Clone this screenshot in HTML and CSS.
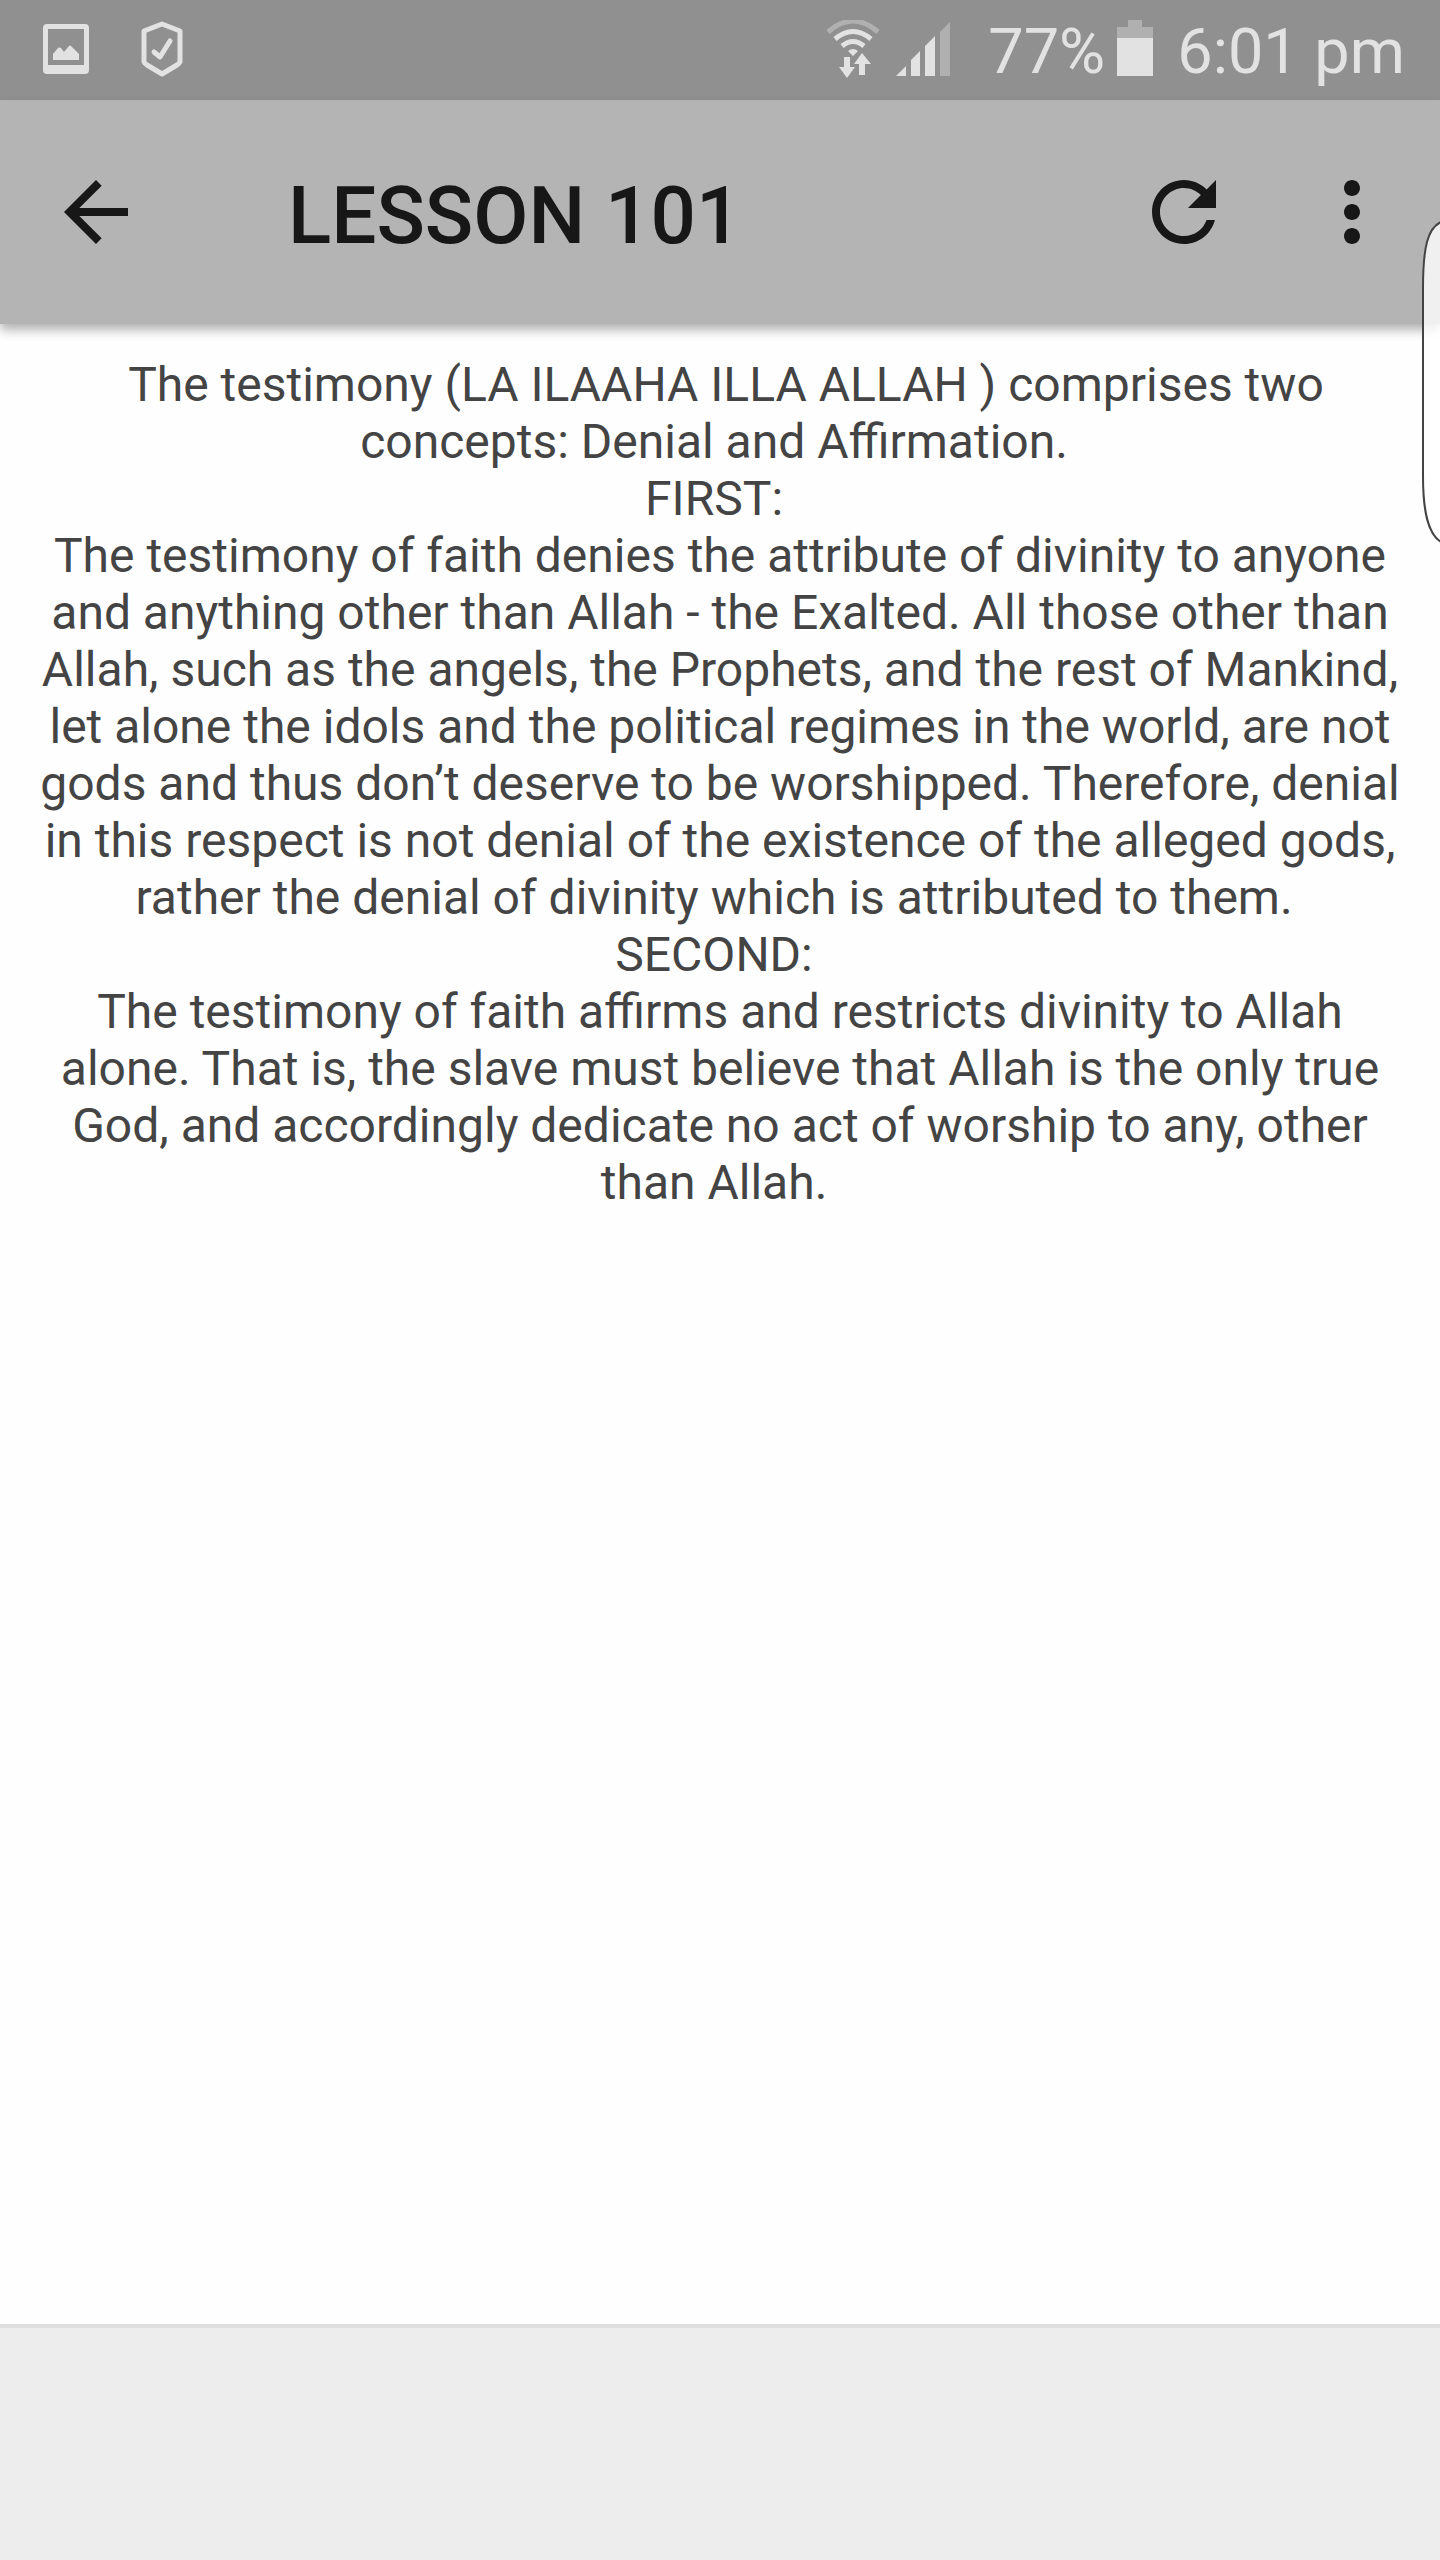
FILE: index.html
```html
<!DOCTYPE html>
<html lang="en">
<head>
<meta charset="utf-8">
<meta name="viewport" content="width=device-width, initial-scale=1">
<title>Lesson 101</title>
<link rel="stylesheet" href="styles.css">
</head>
<body>
<div class="status-bar">
  <div class="notifications">
    <svg width="46" height="60" viewBox="0 0 46 60" aria-hidden="true">
      <path fill="currentColor" fill-rule="evenodd" d="M4 4H42Q46 4 46 8V50Q46 54 42 54H4Q0 54 0 50V8Q0 4 4 4ZM5 9V45H41V9Z"/>
      <path fill="currentColor" d="M10 40V34L15 28Q16 27 18 28L21 32L26 26Q27 25 28 26L36 34V40Z"/>
    </svg>
    <svg width="42" height="60" viewBox="0 0 42 60" fill="none" stroke="currentColor" stroke-width="5" stroke-linejoin="round" stroke-linecap="round" aria-hidden="true">
      <path d="M21 4L39 11V42Q38 44 36 45L21 54L6 45Q4 44 3 42V11Z"/>
      <path d="M13 32L19 37L29 21"/>
    </svg>
  </div>
  <div class="system">
    <svg class="wifi" width="54" height="60" viewBox="0 0 54 60" aria-hidden="true">
      <g fill="none" stroke="currentColor" stroke-width="5">
        <path class="dim" d="M2 12Q27 -10 52 12"/>
        <path d="M9 19Q27 4 45 19"/>
        <path d="M16 26Q27 17 38 26"/>
      </g>
      <path fill="currentColor" d="M22 31Q27 27 32 31L27 36ZM18 37H24V47H29L21 58L13 47H18ZM33 55V44H28L36 33L45 44H39V55Z"/>
    </svg>
    <svg class="signal" width="54" height="60" viewBox="0 0 54 60" aria-hidden="true">
      <path fill="currentColor" d="M0 56L10 46V56ZM15 56V40L24 31V56ZM29 56V26L39 16V56Z"/>
      <path class="dim-fill" d="M44 56V12L54 2V56Z"/>
    </svg>
    <span class="status-text">77%</span>
    <svg class="battery" width="36" height="60" viewBox="0 0 36 60" aria-hidden="true">
      <path class="dim-fill" d="M11 0H25V7H36V18H0V7H11Z"/>
      <path fill="currentColor" d="M0 18H36V56H0Z"/>
    </svg>
    <span class="status-text">6:01 pm</span>
  </div>
</div>
<header class="app-bar">
  <button class="icon-button" type="button" aria-label="Back">
    <svg viewBox="0 0 24 24" aria-hidden="true"><path fill="currentColor" d="M20 11H7.830l5.590-5.590L12 4l-8 8 8 8 1.410-1.410L7.830 13H20v-2z"/></svg>
  </button>
  <h1 class="title">LESSON 101</h1>
  <div class="actions">
    <button class="icon-button" type="button" aria-label="Refresh">
      <svg viewBox="0 0 24 24" aria-hidden="true"><path fill="currentColor" d="M17.650 6.350C16.200 4.900 14.210 4 12 4c-4.420 0-7.990 3.580-7.990 8s3.570 8 7.990 8c3.730 0 6.840-2.550 7.730-6h-2.080c-.82 2.330-3.040 4-5.650 4-3.310 0-6-2.690-6-6s2.690-6 6-6c1.660 0 3.140.69 4.220 1.780L13 11h7V4l-2.350 2.350z"/></svg>
    </button>
    <button class="icon-button" type="button" aria-label="More options">
      <svg viewBox="0 0 24 24" aria-hidden="true"><path fill="currentColor" d="M12 8c1.100 0 2-.9 2-2s-.9-2-2-2-2 .9-2 2 .9 2 2 2zm0 2c-1.100 0-2 .9-2 2s.9 2 2 2 2-.9 2-2-.9-2-2-2zm0 6c-1.100 0-2 .9-2 2s.9 2 2 2 2-.9 2-2-.9-2-2-2z"/></svg>
    </button>
  </div>
</header>
<main class="lesson">
  <p>&nbsp;The testimony (LA ILAAHA ILLA ALLAH ) comprises two concepts: Denial and Affirmation.&nbsp;</p>
  <p>FIRST:&nbsp;</p>
  <p>The testimony of faith denies the attribute of divinity to anyone and anything other than Allah - the Exalted. All those other than Allah, such as the angels, the Prophets, and the rest of Mankind, let alone the idols and the political regimes in the world, are not gods and thus don’t deserve to be worshipped. Therefore, denial in this respect is not denial of the existence of the alleged gods, rather the denial of divinity which is attributed to them.&nbsp;</p>
  <p>SECOND:&nbsp;</p>
  <p>The testimony of faith affirms and restricts divinity to Allah alone. That is, the slave must believe that Allah is the only true God, and accordingly dedicate no act of worship to any, other than Allah.&nbsp;</p>
</main>
<footer class="bottom-bar"></footer>
<svg class="edge-handle" width="18" height="324" viewBox="0 0 18 324" aria-hidden="true">
  <path d="M19 2C6 8 1 26 1 68V256C1 292 6 314 19 322"/>
</svg>
</body>
</html>
```
FILE: styles.css
```css
* {
  box-sizing: border-box;
}

body {
  position: relative;
  display: flex;
  flex-direction: column;
  min-height: 100vh;
  margin: 0;
  background: #fefefe;
  color: #444;
  font-family: Roboto, "Noto Sans", sans-serif;
}

svg {
  display: block;
}

.status-bar {
  display: flex;
  justify-content: space-between;
  height: 100px;
  padding: 0 35px 0 43px;
  background: #909090;
  color: #e2e2e2;
  font-size: 63px;
  line-height: 96px;
  white-space: nowrap;
}

.notifications,
.system {
  display: flex;
  align-items: center;
}

.notifications {
  gap: 52px;
}

.status-text {
  padding-top: 4px;
}

.wifi {
  margin-right: 16px;
}

.signal {
  margin-right: 38px;
}

.battery {
  margin: 0 24px 0 12px;
}

.dim {
  stroke: #b0b0b0;
}

.dim-fill {
  fill: #b0b0b0;
}

.app-bar {
  display: flex;
  align-items: center;
  height: 224px;
  padding: 0 40px 0 48px;
  background: #b4b4b4;
  box-shadow: 0 6px 10px rgba(0, 0, 0, 0.3);
  color: #171717;
}

.icon-button {
  width: 96px;
  height: 96px;
  padding: 0;
  border: 0;
  background: none;
  color: inherit;
}

.title {
  flex: 1;
  margin: 0;
  padding: 8px 0 0 144px;
  font-size: 80px;
  font-weight: 500;
  line-height: 96px;
}

.actions {
  display: flex;
  gap: 72px;
}

.lesson {
  flex: 1;
  padding: 32px;
  font-size: 48px;
  line-height: 57px;
  text-align: center;
}

.lesson p {
  margin: 0;
}

.bottom-bar {
  height: 236px;
  border-top: 4px solid #dfdfdf;
  background: #ededed;
}

/* Pull-out handle that floats over the right edge of the screen */
.edge-handle {
  position: absolute;
  top: 220px;
  right: 0;
  fill: rgba(255, 255, 255, 0.8);
  stroke: #444;
  stroke-width: 2;
}
```
